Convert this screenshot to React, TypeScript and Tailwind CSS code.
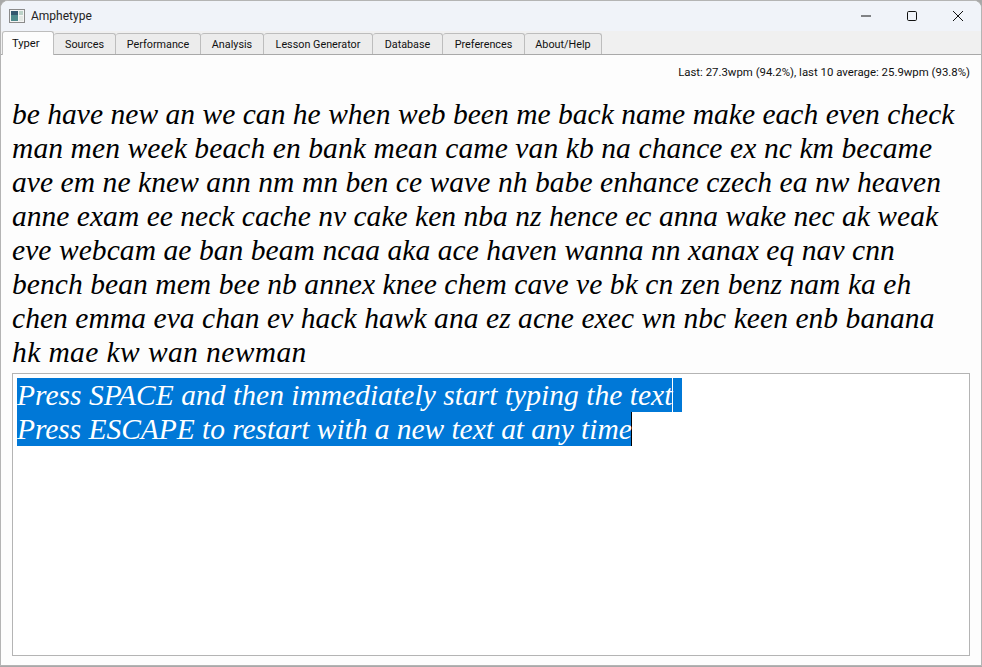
const tabs: [string, string][] = [
  ["Sources", "w-[62px]"],
  ["Performance", "w-[85px]"],
  ["Analysis", "w-[63px]"],
  ["Lesson Generator", "w-[109px]"],
  ["Database", "w-[70px]"],
  ["Preferences", "w-[82px]"],
  ["About/Help", "w-[77px]"],
];

const lines: [string, string][] = [
  ["be have new an we can he when web been me back name make each even check", "tracking-[0.03px]"],
  ["man men week beach en bank mean came van kb na chance ex nc km became", "tracking-[0.1px]"],
  ["ave em ne knew ann nm mn ben ce wave nh babe enhance czech ea nw heaven", "tracking-[0.07px]"],
  ["anne exam ee neck cache nv cake ken nba nz hence ec anna wake nec ak weak", "tracking-[0.03px]"],
  ["eve webcam ae ban beam ncaa aka ace haven wanna nn xanax eq nav cnn", "tracking-[0.07px]"],
  ["bench bean mem bee nb annex knee chem cave ve bk cn zen benz nam ka eh", "tracking-[0.07px]"],
  ["chen emma eva chan ev hack hawk ana ez acne exec wn nbc keen enb banana", "tracking-[0.06px]"],
  ["hk mae kw wan newman", "tracking-[0.4px]"],
];

export default function App() {
  return (
    <div className="w-[982px] h-[667px] bg-[#a8a8a8] font-['Roboto',sans-serif] overflow-hidden">
      <div className="w-[982px] h-[666px] flex flex-col bg-[#fdfdfd] border border-[#b4b4b4] rounded-t-[8px] overflow-hidden">
        <div className="h-[30px] shrink-0 bg-[#f0f3f9] flex items-center pl-[8px]">
          <svg width="16" height="16" viewBox="0 0 16 16" className="shrink-0">
            <rect x="0.5" y="1.5" width="15" height="13" fill="#f4f4f4" stroke="#8a8a8a" />
            <rect x="2" y="3" width="7" height="10" fill="#4f8a8c" />
            <rect x="2" y="3" width="7" height="4" fill="#33566e" />
            <rect x="10" y="3" width="4" height="4" fill="#bcd2c8" />
            <rect x="10" y="8" width="4" height="5" fill="#e4e8e4" />
          </svg>
          <span className="ml-[6px] text-[12px] text-[#222]">Amphetype</span>
          <div className="ml-auto flex items-center h-full">
            <div className="w-[46px] h-full flex items-center justify-center">
              <svg width="12" height="12" viewBox="0 0 12 12"><path d="M1 6h10" stroke="#111" strokeWidth="1" /></svg>
            </div>
            <div className="w-[46px] h-full flex items-center justify-center">
              <svg width="12" height="12" viewBox="0 0 12 12"><rect x="1.5" y="1.5" width="9" height="9" rx="1.2" fill="none" stroke="#111" strokeWidth="1" /></svg>
            </div>
            <div className="w-[46px] h-full flex items-center justify-center">
              <svg width="12" height="12" viewBox="0 0 12 12"><path d="M1 1l10 10M11 1L1 11" stroke="#111" strokeWidth="1" /></svg>
            </div>
          </div>
        </div>
        <div className="h-[24px] shrink-0 bg-[#f0f0f0] border-b border-[#a9a9a9] flex items-end pl-[1px]">
          <div className="w-[52px] h-[24px] -mb-px bg-[#fdfdfd] border border-b-0 border-[#bdbdbd] rounded-t-[3px] flex items-center pl-[9px] pt-[2px] text-[11.2px] text-[#111] z-10 shrink-0">
            Typer
          </div>
          {tabs.map(([t, w]) => (
            <div key={t} className={`${w} h-[21px] bg-[#ececec] border border-l-0 border-b-0 border-[#bdbdbd] rounded-t-[3px] flex items-center justify-center pt-[3px] text-[10.8px] text-[#111] shrink-0`}>
              {t}
            </div>
          ))}
        </div>
        <div className="flex-1 min-h-0 flex flex-col px-[11px] pb-[9px]">
          <div className="h-[42px] shrink-0 flex items-start justify-end text-[11.4px] leading-[14px] text-[#111] pt-[10px]">
            Last: 27.3wpm (94.2%), last 10 average: 25.9wpm (93.8%)
          </div>
          <div className="font-['Liberation_Serif',serif] italic text-[29.5px] leading-[34px] text-black whitespace-nowrap">
            {lines.map(([l, c]) => (
              <div key={l} className={c}>{l}</div>
            ))}
          </div>
          <div className="mt-[4px] flex-1 min-h-0 bg-white border border-[#b4b4b4] pt-[4px] pl-[4px] font-['Liberation_Serif',serif] italic text-[29.5px] leading-[34px] text-white whitespace-nowrap">
            <div className="w-[665px] h-[34px] bg-[#0078d7] flex">
              <div className="w-[656px] h-[34px] border-r border-white tracking-[0.03px]">Press SPACE and then immediately start typing the text</div>
            </div>
            <div className="w-[615px] h-[34px] bg-[#0078d7] border-r border-black tracking-[-0.05px]">Press ESCAPE to restart with a new text at any time</div>
          </div>
        </div>
      </div>
    </div>
  );
}
